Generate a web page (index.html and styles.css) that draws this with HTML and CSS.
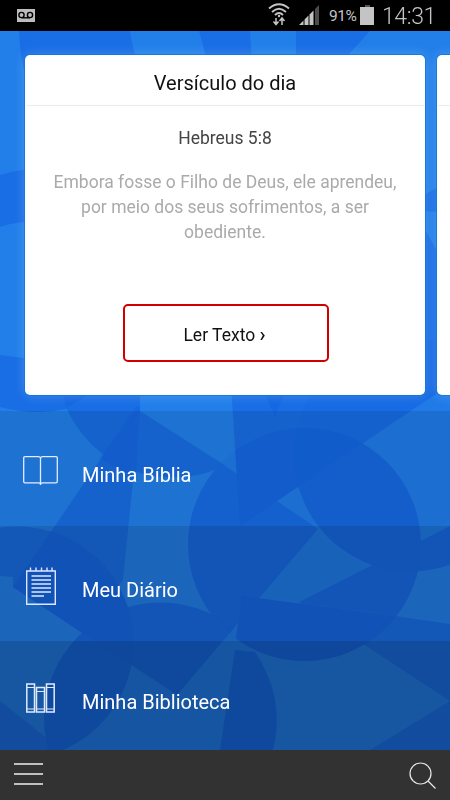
FILE: index.html
```
<!DOCTYPE html>
<html lang="pt-BR">

<head>
    <meta charset="UTF-8">
    <meta name="viewport" content="width=device-width, initial-scale=1.0">
    <link rel="stylesheet" href="styles.css">
    <title>Minha Bíblia</title>
</head>

<body>
    <svg class="backdrop" viewBox="0 0 450 800" aria-hidden="true">
        <defs>
            <clipPath id="square"><path d="M137 406L318 529L177 695L13 587Z" /></clipPath>
            <clipPath id="top-left"><path d="M0 385H140V411L240 475V526H0Z" /></clipPath>
            <clipPath id="wedge"><path d="M231 385L240 526L427 400V385Z" /></clipPath>
            <clipPath id="above"><path d="M0 500H200V710L13 587V577L0 576Z" /></clipPath>
            <clipPath id="below"><path d="M242 596L450 624V701L220 750Z" /></clipPath>
            <clipPath id="ray"><path d="M299 602L450 526V624Z" /></clipPath>
            <clipPath id="disc"><circle cx="17" cy="643" r="116.5" /></clipPath>
            <clipPath id="big-disc"><circle cx="304.5" cy="544.5" r="116.5" /></clipPath>
        </defs>
        <g class="shade">
            <path d="M19 31H130Q133 50 137 62L150 200H25V75Q20 55 19 31Z" />
            <path d="M199 31H250L252 64H208Z" />
            <path d="M296 31H370L340 64H296Z" />
            <path d="M0 175Q12 171 30 169V222Q14 222 0 227Z" />
            <path d="M0 355L40 360V380H92V400Q66 412 40 412Q18 412 0 407Z" />
            <path d="M420 197L440 186V212L420 211Z" />
            <path d="M420 220L450 275V336L436 340L450 345V385L427 400H420Z" />
            <path d="M231 385H427V400L240 526Z" />
            <path d="M137 406L13 587L82 633L123 580L140 411Z" />
            <circle cx="173" cy="361" r="116.5" clip-path="url(#top-left)" />
            <circle cx="304.5" cy="544.5" r="116.5" clip-path="url(#square)" />
            <circle cx="304.5" cy="544.5" r="116.5" clip-path="url(#below)" />
            <circle cx="304.5" cy="544.5" r="116.5" clip-path="url(#ray)" />
            <circle cx="410.5" cy="455" r="116.5" clip-path="url(#big-disc)" />
            <circle cx="410.5" cy="455" r="116.5" clip-path="url(#ray)" />
            <circle cx="17" cy="643" r="116.5" clip-path="url(#above)" />
            <circle cx="160.5" cy="719" r="116.5" clip-path="url(#square)" />
            <circle cx="160.5" cy="719" r="116.5" clip-path="url(#disc)" />
            <path d="M235 650L220 750H273Q286 700 255 652Z" />
            <path d="M0 701L62 750H0Z" />
            <path d="M299 602L450 624V701Z" />
            <path d="M450 701L370 750H450Z" />
        </g>
        <g class="shade deep">
            <path d="M62 385H100Q80 402 66 407Z" />
            <path d="M265 395H284L275 416Z" />
            <path d="M137 406L100 458Q118 471 136 474L140 408Z" />
            <circle cx="17" cy="643" r="116.5" clip-path="url(#square)" />
            <circle cx="304.5" cy="544.5" r="116.5" clip-path="url(#wedge)" />
            <circle cx="304.5" cy="544.5" r="116.5" clip-path="url(#below)" />
            <circle cx="410.5" cy="455" r="116.5" class="rim" />
            <circle cx="304.5" cy="544.5" r="116.5" class="rim" />
            <circle cx="160.5" cy="719" r="116.5" class="rim" />
        </g>
    </svg>

    <header class="status-bar">
        <svg class="voicemail" width="18" height="13" viewBox="0 0 18 13">
            <rect width="18" height="13" fill="#bdbdbd" />
            <g fill="none" stroke="#000" stroke-width="1.4">
                <circle cx="4.5" cy="6" r="2.6" />
                <circle cx="13" cy="6" r="2.6" />
                <path d="M4.5 8.8H13" />
            </g>
        </svg>
        <div class="status-right">
            <svg class="wifi" width="22" height="23" viewBox="0 0 22 23" fill="none" stroke="#c4c4c4" stroke-width="1.8">
                <path d="M1 5.5Q11-3 21 5.5M4 9Q11 2.5 18 9M7 12Q11 8 15 12" />
                <circle cx="11" cy="13" r="1.2" fill="#c4c4c4" stroke="none" />
                <path d="M8 15V21M5.5 18.5L8 21.5L10.5 18.5M14 22V15M11.5 18L14 15L16.5 18" stroke-width="1.5" />
            </svg>
            <svg class="signal" width="21" height="20" viewBox="0 0 21 20">
                <path d="M0 20L4.5 15.500V20ZM5.500 14.500L9.500 10.500V20H5.500ZM10.500 9.500L14.500 5.500V20H10.500Z" fill="#c4c4c4" />
                <path d="M16 4L20 0V20H16Z" fill="#4c4c4c" />
            </svg>
            <span class="percent">91%</span>
            <svg class="battery" width="14" height="20" viewBox="0 0 14 20">
                <path d="M5 0H10V2H5Z" fill="#555" />
                <path d="M0 2H14V20H0Z" fill="#c4c4c4" />
            </svg>
            <span class="clock">14:31</span>
        </div>
    </header>

    <main>
        <section class="cards">
            <article class="card">
                <h1>Versículo do dia</h1>
                <h2>Hebreus 5:8</h2>
                <p>Embora fosse o Filho de Deus, ele aprendeu, por meio dos seus sofrimentos, a ser obediente.</p>
                <a class="read" href="#">Ler Texto <span>›</span></a>
            </article>
            <article class="card next">
                <h1></h1>
            </article>
        </section>

        <nav class="menu">
            <a class="bible" href="#">
                <svg width="35" height="30" viewBox="0 0 35 30" fill="none" stroke="#e4ecff" stroke-width="1.3">
                    <path d="M17.5 2Q17 .7 15.5 .7H2Q.7 .7 .7 2V25.5Q.7 26.8 2 26.8H15.5Q17.5 26.8 17.5 28.5Q17.5 26.8 19.5 26.8H33Q34.3 26.8 34.3 25.5V2Q34.3 .7 33 .7H19.5Q18 .7 17.5 2V29" />
                </svg>
                <span>Minha Bíblia</span>
            </a>
            <a class="diary" href="#">
                <svg width="30" height="38" viewBox="0 0 30 38" fill="none" stroke="#dfe7ff" stroke-width="1.4">
                    <path d="M.7 4H29.3V37.3H.7Z" />
                    <path d="M4.5 .5V4M10 .5V4M15.5 .5V4M21 .5V4M26 .5V4M5.5 9H25M5.5 13H25M5.5 17H25M5.5 21H25M5.5 25H25M5.5 29H18" />
                </svg>
                <span>Meu Diário</span>
            </a>
            <a class="library" href="#">
                <svg width="29" height="30" viewBox="0 0 29 30" fill="none" stroke="#dfe9ff" stroke-width="1.5">
                    <path d="M.8 1H8.5V29H.8ZM10.5 4.5H18.5V29H10.5ZM20.5 1H28.2V29H20.5Z" />
                    <path d="M1 4.5H8.5M10.5 8.5H18.5M20.5 4.5H28M1 26H8.5M10.5 26H18.5M20.5 26H28" stroke-width="1.2" />
                </svg>
                <span>Minha Biblioteca</span>
            </a>
        </nav>
    </main>

    <footer class="toolbar">
        <svg width="29" height="24" viewBox="0 0 29 24" stroke="#eee" stroke-width="1.6">
            <path d="M0 2H29M0 12H29M0 22H29" />
        </svg>
        <svg width="27" height="27" viewBox="0 0 27 27" fill="none" stroke="#e8e8e8" stroke-width="1.2">
            <circle cx="11.5" cy="11.5" r="10.5" />
            <path d="M19 19L26.5 26.5" />
        </svg>
    </footer>
</body>

</html>
```
FILE: styles.css
```
* {
    margin: 0;
    padding: 0;
    box-sizing: border-box;
}

body {
    position: relative;
    width: 450px;
    height: 800px;
    overflow: hidden;
    display: flex;
    flex-direction: column;
    background-color: #227fea;
    font-family: Roboto, sans-serif;
}

a {
    color: inherit;
    text-decoration: none;
}

svg {
    flex-shrink: 0;
}

.backdrop {
    position: absolute;
    top: 0;
    left: 0;
    width: 450px;
    height: 800px;
    z-index: -1;
    fill: #074bdc;
}

.shade {
    opacity: 0.32;
}

.deep {
    opacity: 0.18;
}

.deep .rim {
    opacity: 0.35;
}

.status-bar {
    height: 31px;
    flex-shrink: 0;
    background-color: #000;
    color: #c4c4c4;
    display: flex;
    justify-content: space-between;
    padding: 0 14px 0 17px;
}

.voicemail {
    margin-top: 9px;
}

.status-right {
    display: flex;
    height: 31px;
}

.wifi {
    margin: 3px 9px 0 0;
}

.signal {
    margin: 5px 9px 0 0;
}

.percent {
    width: 31px;
    font-size: 15.5px;
    line-height: 32px;
    letter-spacing: -0.5px;
}

.battery {
    margin: 5px 8px 0 0;
}

.clock {
    width: 54px;
    font-size: 23px;
    line-height: 33px;
    font-weight: 300;
    letter-spacing: -0.4px;
    white-space: nowrap;
}

main {
    flex: 1;
    display: flex;
    flex-direction: column;
}

.cards {
    height: 380px;
    padding: 24px 0 0 25px;
    display: flex;
    gap: 12px;
    overflow: hidden;
}

.card {
    width: 400px;
    height: 340px;
    flex-shrink: 0;
    background-color: #fff;
    border-radius: 5px;
    box-shadow: 0 0 0 1px rgba(8, 123, 220, 0.8), 0 0 12px rgba(255, 255, 255, 0.22);
    display: flex;
    flex-direction: column;
    align-items: center;
    text-align: center;
}

.card h1 {
    width: 398px;
    height: 51px;
    border-bottom: 1px solid #ececec;
    font-size: 20px;
    font-weight: 400;
    line-height: 57px;
    color: #111;
}

.card h2 {
    margin-top: 20px;
    font-size: 17.5px;
    font-weight: 400;
    line-height: 24px;
    color: #444;
}

.card p {
    width: 360px;
    margin-top: 20px;
    font-size: 17.5px;
    line-height: 25px;
    color: #aaa;
}

.read {
    width: 206px;
    height: 58px;
    margin: 59px 0 0 1px;
    padding-right: 2px;
    border: 2px solid #d00000;
    border-radius: 5px;
    font-size: 17.5px;
    line-height: 57px;
    color: #111;
}

.read span {
    font-size: 20px;
    font-weight: 500;
}

.menu {
    flex: 1;
    display: flex;
    flex-direction: column;
    color: #fff;
    font-size: 20px;
}

.menu a {
    display: grid;
    grid-template-columns: 81px 1fr;
    align-items: center;
}

.menu svg {
    justify-self: center;
    margin-top: 5px;
}

.menu span {
    padding: 12px 0 0 1px;
}

.bible {
    height: 115px;
    background-color: rgba(0, 0, 0, 0.1);
}

.diary {
    height: 115px;
    background-color: rgba(0, 0, 0, 0.2);
}

.library {
    height: 109px;
    background-color: rgba(0, 0, 0, 0.31);
}

.toolbar {
    height: 50px;
    flex-shrink: 0;
    background-color: #323232;
    display: flex;
    align-items: center;
    justify-content: space-between;
    padding: 0 14px 2px;
}

.toolbar svg:last-child {
    margin-top: 2px;
}
```
